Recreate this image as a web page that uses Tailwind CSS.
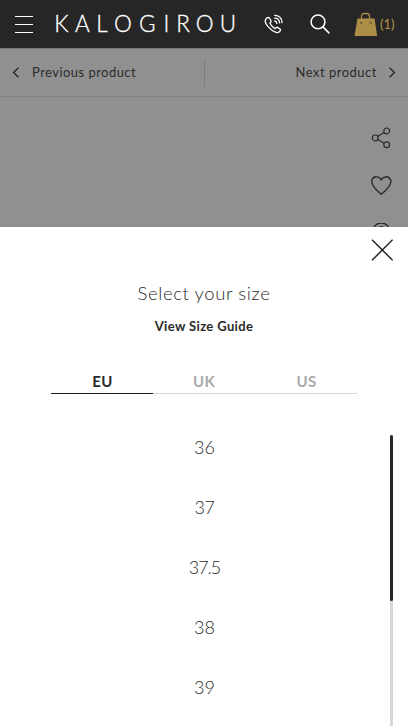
<!DOCTYPE html>
<html lang="en">
<head>
<meta charset="utf-8">
<title>Kalogirou</title>
<script src="https://cdn.jsdelivr.net/npm/@tailwindcss/browser@4"></script>
</head>
<body class="relative h-[726px] w-[408px] overflow-hidden bg-[#909090] font-['Lato',sans-serif] text-[#2b2b2b]">
<header class="flex h-12 items-center bg-[#262626] text-white">
  <button class="ml-[15px] flex h-[17px] w-[18px] flex-col justify-between" aria-label="Menu">
    <span class="h-px w-full bg-white"></span><span class="h-px w-full bg-white"></span><span class="h-px w-full bg-white"></span>
  </button>
  <svg class="ml-[17px] h-12 w-[190px] shrink-0" viewBox="50 0 190 48" fill="white" stroke="white" stroke-width=".3" font-family="Lato" font-size="22.5" font-weight="300" aria-label="Kalogirou">
    <text y="31.700" x="54.300 75 96.200 114 139 163.500 176.300 195.700 219.700">KALOGIROU</text>
  </svg>
  <svg class="ml-[24px] h-5 w-5 shrink-0" viewBox="0 0 20 20" fill="none" stroke="white" stroke-width="1.3" stroke-linecap="round" stroke-linejoin="round">
    <path d="M3.200 3.800 1.900 5C.6 6.700 2 10.500 5.500 14.100 9 17.600 13.200 19.500 15 18l1-1c.8-.8.5-1.500-.1-2l-2-1.400c-.7-.5-1.300-.4-1.900.2l-.8.8C9.300 13.900 6.600 10.900 5.900 9.100l.8-.9c.6-.6.6-1.200.1-1.900L5.300 4c-.6-.8-1.300-.9-2.100-.2Z"/>
    <path d="M10.800 7c1.200.2 1.900 1 2.100 2.300M10.600 4.100c2.800 0 4.700 1.900 5 4.800M10.600 1.300c4.400-.1 7.200 3 7.500 7.300"/>
  </svg>
  <svg class="ml-[26px] h-5 w-5 shrink-0" viewBox="0 0 20 20" fill="none" stroke="white" stroke-width="1.500" stroke-linecap="round"><circle cx="8" cy="7.900" r="6.900"/><path d="m13 12.900 5.900 6"/></svg>
  <svg class="ml-[24px] h-6 w-6 shrink-0" viewBox="0 0 24 24"><path d="M3.500 6.500h17L23.200 24H.5Z" fill="#ad8e47"/><path d="M7.500 7V4.500Q7.500 1.500 10.500 1.500h2Q15.500 1.500 15.500 4.500V7" fill="none" stroke="#ad8e47" stroke-width="1.300"/><path d="m6 10.300 1.200 1 1.200-1m7 0 1.200 1 1.200-1" fill="none" stroke="#3b3323"/></svg>
  <span class="ml-[2px] mt-[2px] text-[13px] font-medium text-[#ad8e47]">(1)</span>
</header>
<nav class="flex h-[49px] items-center border-t border-b border-t-[#777] border-b-[#808080] text-[13px]">
  <a class="flex h-7 w-[205px] items-center border-r border-[#7c7c7c]">
    <svg class="ml-3 h-[11px] w-[8px]" viewBox="0 0 8 11" fill="none" stroke="#262626" stroke-width="1.300"><path d="M6.500.700 1.500 5.500l5 4.800"/></svg>
    <span class="ml-[12px] tracking-[.46px]">Previous product</span>
  </a>
  <a class="flex h-7 w-[203px] items-center justify-end">
    <span class="mr-[11px] tracking-[.5px]">Next product</span>
    <svg class="mr-3 h-[11px] w-[8px]" viewBox="0 0 8 11" fill="none" stroke="#262626" stroke-width="1.300"><path d="m1.500.700 5 4.800-5 4.800"/></svg>
  </a>
</nav>
<aside class="flex flex-col items-end pt-[30px] pr-4">
  <svg class="h-[22px] w-[22px]" viewBox="0 0 22 22" fill="none" stroke="#2b2b2b" stroke-width="1.200"><circle cx="5.200" cy="10.900" r="2.900"/><circle cx="16.700" cy="3.900" r="2.900"/><circle cx="16.700" cy="17.700" r="2.900"/><path d="m7.700 9.300 6.500-3.900M7.700 12.400l6.500 3.800"/></svg>
  <svg class="mt-[26px] h-[22px] w-[22px]" viewBox="0 0 22 22" fill="none" stroke="#2b2b2b" stroke-width="1.400" stroke-linejoin="round"><path d="M11.300 5C9.500.8 3.800.8 2 4.800.5 8.700 3.700 13 11.300 19.300 18.900 13 22.100 8.700 20.600 4.800 18.800.8 13.100.8 11.300 5Z"/></svg>
  <svg class="mt-[26px] h-[22px] w-[22px]" viewBox="0 0 22 22" fill="none" stroke="#2b2b2b" stroke-width="1.300"><circle cx="11.300" cy="8.500" r="8.500"/><circle cx="11.300" cy="7.200" r="3.500"/></svg>
</aside>
<section class="absolute inset-x-0 top-[227px] flex h-[499px] flex-col bg-white">
  <svg class="mt-3 mr-[15px] h-[22px] w-[22px] shrink-0 self-end" viewBox="0 0 22 22" fill="none" stroke="#262626" stroke-width="1.500"><path d="m1 .700 20.600 20.600M21.600.700 1 21.300"/></svg>
  <h2 class="mt-[20px] text-center text-[18.500px] leading-6 font-light tracking-[.6px]">Select your size</h2>
  <a class="mt-[11px] text-center text-[13px] leading-5 font-bold tracking-[.37px]">View Size Guide</a>
  <div class="mx-[51px] mt-[35px] flex h-[23px] text-center text-[15px] leading-5 font-bold tracking-[.3px] text-[#aaa]">
    <span class="w-[102px] border-b border-[#1c1c1c] pl-px text-[#2b2b2b]">EU</span>
    <span class="w-[102px] border-b border-[#d8d8d8]">UK</span>
    <span class="w-[102px] border-b border-[#d8d8d8] pl-px">US</span>
  </div>
  <div class="mt-[27px] flex min-h-0 flex-1 pt-[14px]">
    <ul class="-mt-[2px] ml-[19px] flex-1 text-center text-[18px] font-light">
      <li class="h-[60px] leading-[28px]">36</li><li class="h-[60px] leading-[28px] tracking-[-.5px]">37</li><li class="h-[60px] leading-[28px] tracking-[-1px]">37.5</li><li class="h-[60px] leading-[28px]">38</li><li class="h-[60px] leading-[28px]">39</li>
    </ul>
    <div class="mr-[15px] w-[3px] bg-[#d8d8d8]"><div class="h-[166px] rounded-full bg-[#252827]"></div></div>
  </div>
</section>
</body>
</html>
